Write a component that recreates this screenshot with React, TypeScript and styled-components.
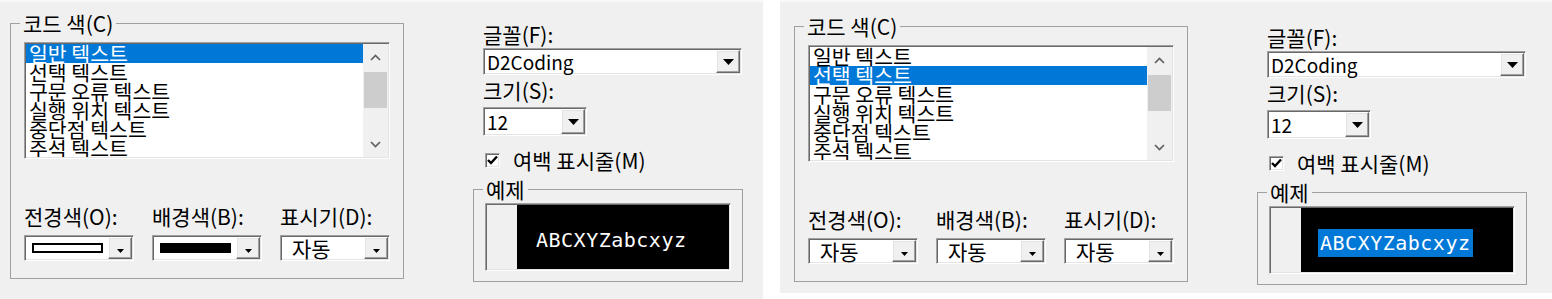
import React from 'react';
import styled, { createGlobalStyle } from 'styled-components';

const GlobalStyle = createGlobalStyle`
  body {
    margin: 0;
    background: #fff;
    font-family: "Noto Sans CJK KR", "Noto Sans", sans-serif;
  }
`;

const Page = styled.div`
  display: flex;
  align-items: flex-start;
  gap: 17px;
`;

const Panel = styled.div<{ $width: number; $height: number; $dx: number; $dy: number }>`
  box-sizing: border-box;
  width: ${p => p.$width}px;
  height: ${p => p.$height}px;
  padding: ${p => 11 + p.$dy}px 0 0 ${p => 10 + p.$dx}px;
  border-top: 2px solid #f9f9f9;
  background: #f0f0f0;
  display: flex;
  align-items: flex-start;
  gap: 69px;
  color: #000;
  font-size: 21px;
`;

const GroupBox = styled.fieldset<{ $width: number; $mt?: number }>`
  box-sizing: border-box;
  width: ${p => p.$width}px;
  min-width: 0;
  margin: ${p => p.$mt || 0}px 0 0 0;
  padding: 0;
  border: 1px solid #a0a0a0;
`;

const Legend = styled.legend`
  margin-left: 9px;
  padding: 0 3px;
  font-size: 21px;
  line-height: 20px;
`;

const GroupBody = styled.div`
  padding: 9px 13px 17px;
`;

const sunken = `
  border: 1px solid;
  border-color: #a0a0a0 #fff #fff #a0a0a0;
  box-shadow: inset 1px 1px 0 #696969, inset -1px -1px 0 #e3e3e3;
`;

const ListBox = styled.div`
  box-sizing: border-box;
  display: flex;
  height: 117px;
  padding: 1px;
  background: #fff;
  ${sunken}
`;

const Items = styled.ul`
  flex: 1;
  margin: 0;
  padding: 0;
  list-style: none;
  overflow: hidden;
`;

const Item = styled.li<{ $selected: boolean }>`
  height: 19px;
  padding-left: 3px;
  line-height: 19px;
  font-size: 20.5px;
  white-space: nowrap;
  background: ${p => (p.$selected ? '#0078d7' : 'transparent')};
  color: ${p => (p.$selected ? '#fff' : '#000')};
`;

const ScrollBar = styled.div`
  width: 25px;
  display: flex;
  flex-direction: column;
  background: #f0f0f0;
`;

const ScrollArrow = styled.div`
  height: 26px;
  display: flex;
  align-items: center;
  justify-content: center;
`;

const Thumb = styled.div`
  height: 36px;
  margin: 2px 1px 0;
  background: #cdcdcd;
`;

const Track = styled.div`
  flex: 1;
`;

const ColorGrid = styled.div`
  display: grid;
  grid-template-columns: repeat(3, 110px);
  justify-content: space-between;
  row-gap: 9px;
  margin-top: 47px;
`;

const FieldLabel = styled.div<{ $mt?: number }>`
  margin-top: ${p => p.$mt || 0}px;
  line-height: 20px;
  white-space: nowrap;
`;

const Combo = styled.div<{ $width?: number; $height: number; $mt?: number }>`
  box-sizing: border-box;
  display: flex;
  width: ${p => (p.$width ? `${p.$width}px` : '100%')};
  height: ${p => p.$height}px;
  margin-top: ${p => p.$mt || 0}px;
  padding: 1px;
  background: #fff;
  ${sunken}
`;

const ComboValue = styled.div<{ $indent: number; $size?: number }>`
  flex: 1;
  display: flex;
  align-items: center;
  padding-left: ${p => p.$indent}px;
  font-size: ${p => p.$size || 21}px;
  line-height: 20px;
  white-space: nowrap;
`;

const DropButton = styled.div`
  box-sizing: border-box;
  width: 24px;
  display: flex;
  align-items: center;
  justify-content: center;
  background: #f0f0f0;
  border: 1px solid;
  border-color: #fff #696969 #696969 #fff;
  box-shadow: inset -1px -1px 0 #a0a0a0, inset 1px 1px 0 #e3e3e3;
`;

const Swatch = styled.span<{ $fill: string }>`
  display: block;
  box-sizing: border-box;
  width: 71px;
  height: 10px;
  border: 2px solid #000;
  background: ${p => p.$fill};
`;

const Column = styled.div`
  width: 270px;
  display: flex;
  flex-direction: column;
`;

const Fields = styled.div`
  display: flex;
  flex-direction: column;
  align-items: flex-start;
  padding-left: 10px;
  margin-top: 11px;
`;

const CheckRow = styled.label`
  display: flex;
  align-items: center;
  gap: 13px;
  margin: 14px 0 0 2px;
  line-height: 20px;
  white-space: nowrap;
`;

const CheckBox = styled.span`
  box-sizing: border-box;
  width: 15px;
  height: 15px;
  display: flex;
  align-items: center;
  justify-content: center;
  background: #fff;
  ${sunken}
`;

const Preview = styled.div`
  box-sizing: border-box;
  display: flex;
  height: 68px;
  margin: 4px 11px 10px;
  padding: 1px;
  background: #000;
  ${sunken}
`;

const Gutter = styled.div`
  width: 30px;
  background: #f0f0f0;
`;

const SampleArea = styled.div`
  flex: 1;
  display: flex;
  align-items: center;
  padding: 5px 0 0 17px;
  background: #000;
`;

const SampleText = styled.span<{ $selected: boolean }>`
  padding: 0 2px;
  font-family: "DejaVu Sans Mono", monospace;
  font-size: 20px;
  letter-spacing: 0.5px;
  line-height: 28px;
  color: #fff;
  background: ${p => (p.$selected ? '#0078d7' : 'transparent')};
`;

const Chevron = ({ up }: { up: boolean }) => (
  <svg width="11" height="7" viewBox="0 0 11 7">
    <polyline
      points={up ? '1,6 5.5,1.5 10,6' : '1,1 5.5,5.5 10,1'}
      fill="none"
      stroke="#606060"
      strokeWidth="1.7"
    />
  </svg>
);

const Arrow = ({ small }: { small?: boolean }) =>
  small ? (
    <svg width="7" height="4" viewBox="0 0 7 4" style={{ marginTop: 6 }}>
      <polygon points="0,0 7,0 3.5,4" fill="#000" />
    </svg>
  ) : (
    <svg width="11" height="6" viewBox="0 0 11 6">
      <polygon points="0,0 11,0 5.5,6" fill="#000" />
    </svg>
  );

type ColorValue = { swatch: string } | { text: string };

const ColorCombo = ({ value }: { value: ColorValue }) => (
  <Combo $height={26}>
    <ComboValue $indent={'swatch' in value ? 6 : 10}>
      {'swatch' in value ? <Swatch $fill={value.swatch} /> : value.text}
    </ComboValue>
    <DropButton>
      <Arrow small />
    </DropButton>
  </Combo>
);

const codeItems = ['일반 텍스트', '선택 텍스트', '구문 오류 텍스트', '실행 위치 텍스트', '중단점 텍스트', '주석 텍스트'];

type DialogProps = {
  width: number;
  height: number;
  dx: number;
  dy: number;
  selected: number;
  colors: ColorValue[];
  sampleSelected: boolean;
};

const ColorDialog = ({ width, height, dx, dy, selected, colors, sampleSelected }: DialogProps) => (
  <Panel $width={width} $height={height} $dx={dx} $dy={dy}>
    <GroupBox $width={394}>
      <Legend>코드 색(C)</Legend>
      <GroupBody>
        <ListBox>
          <Items>
            {codeItems.map((item, i) => (
              <Item key={item} $selected={i === selected}>
                {item}
              </Item>
            ))}
          </Items>
          <ScrollBar>
            <ScrollArrow>
              <Chevron up />
            </ScrollArrow>
            <Thumb />
            <Track />
            <ScrollArrow>
              <Chevron up={false} />
            </ScrollArrow>
          </ScrollBar>
        </ListBox>
        <ColorGrid>
          <FieldLabel>전경색(O):</FieldLabel>
          <FieldLabel>배경색(B):</FieldLabel>
          <FieldLabel>표시기(D):</FieldLabel>
          {colors.map((c, i) => (
            <ColorCombo key={i} value={c} />
          ))}
        </ColorGrid>
      </GroupBody>
    </GroupBox>
    <Column>
      <Fields>
        <FieldLabel>글꼴(F):</FieldLabel>
        <Combo $width={259} $height={27} $mt={4}>
          <ComboValue $indent={2} $size={19}>D2Coding</ComboValue>
          <DropButton>
            <Arrow />
          </DropButton>
        </Combo>
        <FieldLabel $mt={5}>크기(S):</FieldLabel>
        <Combo $width={104} $height={29} $mt={7}>
          <ComboValue $indent={2} $size={19}>12</ComboValue>
          <DropButton>
            <Arrow />
          </DropButton>
        </Combo>
        <CheckRow>
          <CheckBox>
            <svg width="11" height="10" viewBox="0 0 11 10">
              <polyline points="1,5 4,8 10,1.5" fill="none" stroke="#000" strokeWidth="2.4" />
            </svg>
          </CheckBox>
          여백 표시줄(M)
        </CheckRow>
      </Fields>
      <GroupBox $width={270} $mt={9}>
        <Legend>예제</Legend>
        <Preview>
          <Gutter />
          <SampleArea>
            <SampleText $selected={sampleSelected}>ABCXYZabcxyz</SampleText>
          </SampleArea>
        </Preview>
      </GroupBox>
    </Column>
  </Panel>
);

export default function App() {
  return (
    <>
      <GlobalStyle />
      <Page>
        <ColorDialog
          width={763}
          height={299}
          dx={0}
          dy={0}
          selected={0}
          colors={[{ swatch: '#fff' }, { swatch: '#000' }, { text: '자동' }]}
          sampleSelected={false}
        />
        <ColorDialog
          width={772}
          height={293}
          dx={4}
          dy={3}
          selected={1}
          colors={[{ text: '자동' }, { text: '자동' }, { text: '자동' }]}
          sampleSelected
        />
      </Page>
    </>
  );
}
